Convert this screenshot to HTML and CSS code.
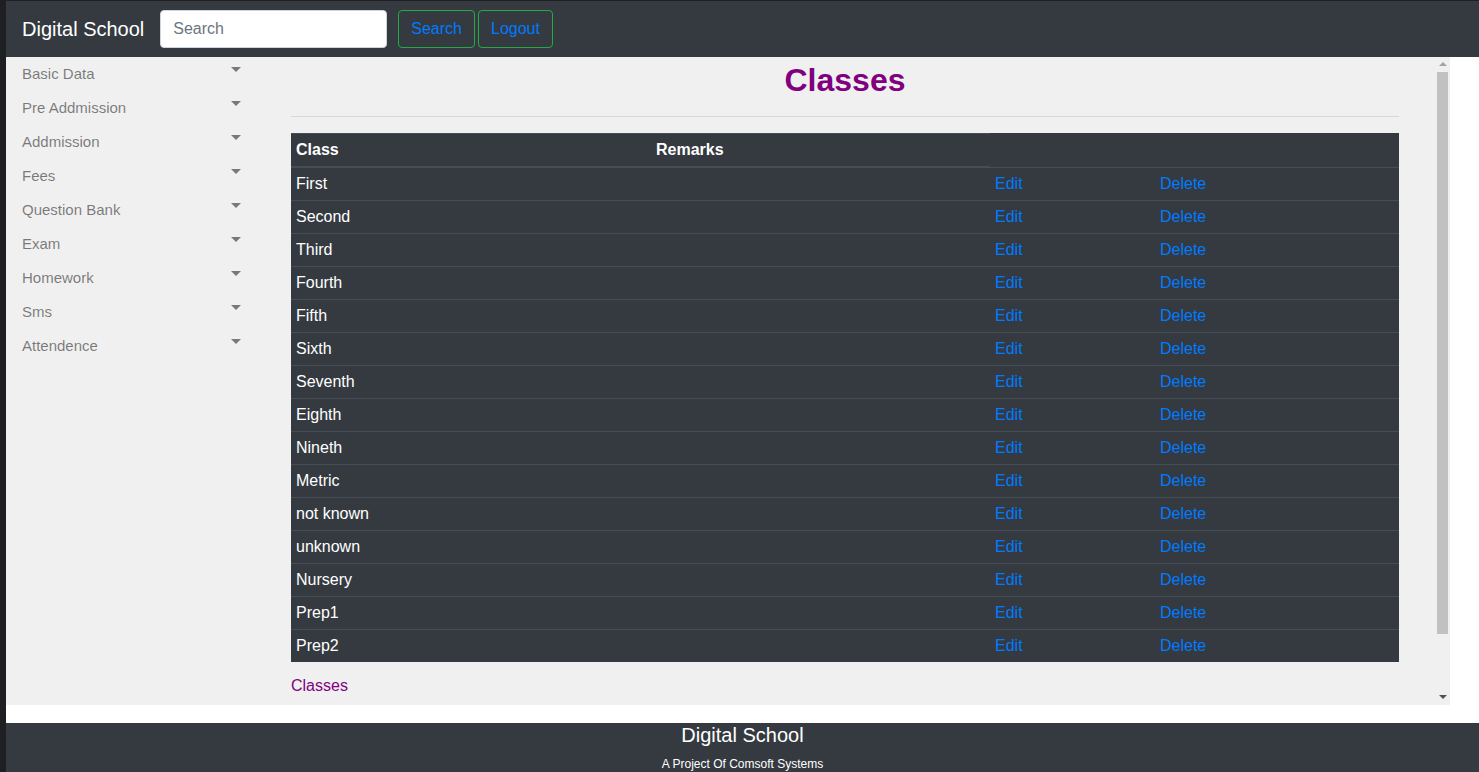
FILE: index.html
```html
<!DOCTYPE html>
<html lang="en">
<head>
<meta charset="utf-8">
<title>Digital School - Classes</title>
<link rel="stylesheet" href="styles.css">
</head>
<body>
<div class="page">
  <nav class="navbar">
    <span class="brand">Digital School</span>
    <input class="search-input" type="text" placeholder="Search">
    <button class="btn">Search</button>
    <button class="btn">Logout</button>
  </nav>

  <div class="workspace">
    <aside class="sidebar">
      <div class="side-item"><span>Basic Data</span><i class="caret"></i></div>
      <div class="side-item"><span>Pre Addmission</span><i class="caret"></i></div>
      <div class="side-item"><span>Addmission</span><i class="caret"></i></div>
      <div class="side-item"><span>Fees</span><i class="caret"></i></div>
      <div class="side-item"><span>Question Bank</span><i class="caret"></i></div>
      <div class="side-item"><span>Exam</span><i class="caret"></i></div>
      <div class="side-item"><span>Homework</span><i class="caret"></i></div>
      <div class="side-item"><span>Sms</span><i class="caret"></i></div>
      <div class="side-item"><span>Attendence</span><i class="caret"></i></div>
    </aside>

    <main class="main">
      <h2 class="title">Classes</h2>
      <hr class="rule">
      <table class="data">
        <colgroup>
          <col class="c1"><col class="c2"><col class="c3"><col class="c4">
        </colgroup>
        <thead>
          <tr><th>Class</th><th>Remarks</th></tr>
        </thead>
        <tbody>
          <tr><td>First</td><td></td><td><a>Edit</a></td><td><a>Delete</a></td></tr>
          <tr><td>Second</td><td></td><td><a>Edit</a></td><td><a>Delete</a></td></tr>
          <tr><td>Third</td><td></td><td><a>Edit</a></td><td><a>Delete</a></td></tr>
          <tr><td>Fourth</td><td></td><td><a>Edit</a></td><td><a>Delete</a></td></tr>
          <tr><td>Fifth</td><td></td><td><a>Edit</a></td><td><a>Delete</a></td></tr>
          <tr><td>Sixth</td><td></td><td><a>Edit</a></td><td><a>Delete</a></td></tr>
          <tr><td>Seventh</td><td></td><td><a>Edit</a></td><td><a>Delete</a></td></tr>
          <tr><td>Eighth</td><td></td><td><a>Edit</a></td><td><a>Delete</a></td></tr>
          <tr><td>Nineth</td><td></td><td><a>Edit</a></td><td><a>Delete</a></td></tr>
          <tr><td>Metric</td><td></td><td><a>Edit</a></td><td><a>Delete</a></td></tr>
          <tr><td>not known</td><td></td><td><a>Edit</a></td><td><a>Delete</a></td></tr>
          <tr><td>unknown</td><td></td><td><a>Edit</a></td><td><a>Delete</a></td></tr>
          <tr><td>Nursery</td><td></td><td><a>Edit</a></td><td><a>Delete</a></td></tr>
          <tr><td>Prep1</td><td></td><td><a>Edit</a></td><td><a>Delete</a></td></tr>
          <tr><td>Prep2</td><td></td><td><a>Edit</a></td><td><a>Delete</a></td></tr>
        </tbody>
      </table>
      <a class="crumb">Classes</a>
    </main>

    <div class="scrollbar" aria-hidden="true">
      <div class="sb-button"><i class="arrow-up"></i></div>
      <div class="sb-track"><div class="sb-thumb"></div></div>
      <div class="sb-button"><i class="arrow-down"></i></div>
    </div>
  </div>

  <footer class="footer">
    <div class="foot-title">Digital School</div>
    <div class="foot-sub">A Project Of Comsoft Systems</div>
  </footer>
</div>
</body>
</html>
```

FILE: styles.css
```css
html {
  background: #1e1f22;
  height: 100%;
  overflow: hidden;
}

body {
  margin: 1px 0 0 6px;
  background: #ffffff;
  font-family: "Liberation Sans", Arial, sans-serif;
  font-size: 16px;
  line-height: 24px;
  height: 771px;
  overflow: hidden;
}

.page {
  display: flex;
  flex-direction: column;
}

/* ---------- navbar ---------- */
.navbar {
  height: 56px;
  background: #343a40;
  display: flex;
  align-items: center;
  padding: 0 16px;
  box-sizing: border-box;
}

.brand {
  color: #ffffff;
  font-size: 20px;
  line-height: 30px;
  margin-right: 16px;
}

.search-input {
  width: 227px;
  height: 38px;
  box-sizing: border-box;
  border: 1px solid #ced4da;
  border-radius: 4px;
  padding: 6px 12px;
  font-family: inherit;
  font-size: 16px;
  color: #495057;
  background: #ffffff;
  margin-right: 11px;
}

.search-input::placeholder {
  color: #6c757d;
}

.btn {
  height: 38px;
  box-sizing: border-box;
  background: transparent;
  border: 1px solid #28a745;
  border-radius: 4px;
  color: #007bff;
  font-family: inherit;
  font-size: 16px;
  padding: 6px 12px;
  margin-right: 3px;
}

/* ---------- workspace ---------- */
.workspace {
  height: 648px;
  width: 1444px;
  background: #f0f0f0;
  display: flex;
  overflow: hidden;
}

.sidebar {
  width: 251px;
  flex-shrink: 0;
  align-self: flex-start;
}

.side-item {
  height: 34px;
  padding: 0 16px;
  display: flex;
  align-items: center;
  justify-content: space-between;
  font-size: 15px;
  color: rgba(0, 0, 0, 0.5);
}

.caret {
  width: 0;
  height: 0;
  border-top: 5px solid rgba(0, 0, 0, 0.5);
  border-left: 5px solid transparent;
  border-right: 5px solid transparent;
  margin-bottom: 9px;
}

.main {
  width: 1108px;
  flex-shrink: 0;
  margin-left: 34px;
  align-self: flex-start;
}

.title {
  margin: 4px 0 0;
  text-align: center;
  color: #800080;
  font-size: 32px;
  line-height: 38px;
  font-weight: bold;
}

.rule {
  margin: 17px 0 16px;
  border: 0;
  border-top: 1px solid rgba(0, 0, 0, 0.1);
}

/* ---------- table ---------- */
.data {
  width: 1108px;
  border-collapse: collapse;
  background: #343a40;
  color: #ffffff;
  table-layout: fixed;
}

.c1 { width: 360px; }
.c2 { width: 339px; }
.c3 { width: 165px; }
.c4 { width: 244px; }

.data th {
  text-align: left;
  font-weight: bold;
  padding: 4px 5px;
  border-top: 1px solid #454d55;
  border-bottom: 2px solid #454d55;
  height: 24px;
}

.data td {
  padding: 4px 5px;
  border-top: 1px solid #454d55;
  height: 24px;
}

.data a {
  color: #007bff;
}

.crumb {
  display: block;
  margin-top: 12px;
  color: #800080;
}

/* ---------- fake scrollbar ---------- */
.scrollbar {
  margin-left: auto;
  width: 15px;
  flex-shrink: 0;
  display: flex;
  flex-direction: column;
  background: #f0f0f0;
}

.sb-button {
  height: 15px;
  display: flex;
  align-items: center;
  justify-content: center;
  flex-shrink: 0;
}

.arrow-up {
  width: 0;
  height: 0;
  border-bottom: 4px solid #a3a3a3;
  border-left: 4px solid transparent;
  border-right: 4px solid transparent;
  margin-bottom: 2px;
}

.arrow-down {
  width: 0;
  height: 0;
  border-top: 4px solid #505050;
  border-left: 4px solid transparent;
  border-right: 4px solid transparent;
  margin-bottom: 1px;
}

.sb-track {
  flex: 1;
  padding: 0 2px;
}

.sb-thumb {
  height: 562px;
  background: #c1c1c1;
}

/* ---------- footer ---------- */
.footer {
  margin-top: 18px;
  background: #343a40;
  color: #ffffff;
  text-align: center;
  height: 49px;
}

.foot-title {
  font-size: 20px;
  line-height: 24px;
}

.foot-sub {
  font-size: 12px;
  line-height: 16px;
  margin-top: 9px;
}
```
